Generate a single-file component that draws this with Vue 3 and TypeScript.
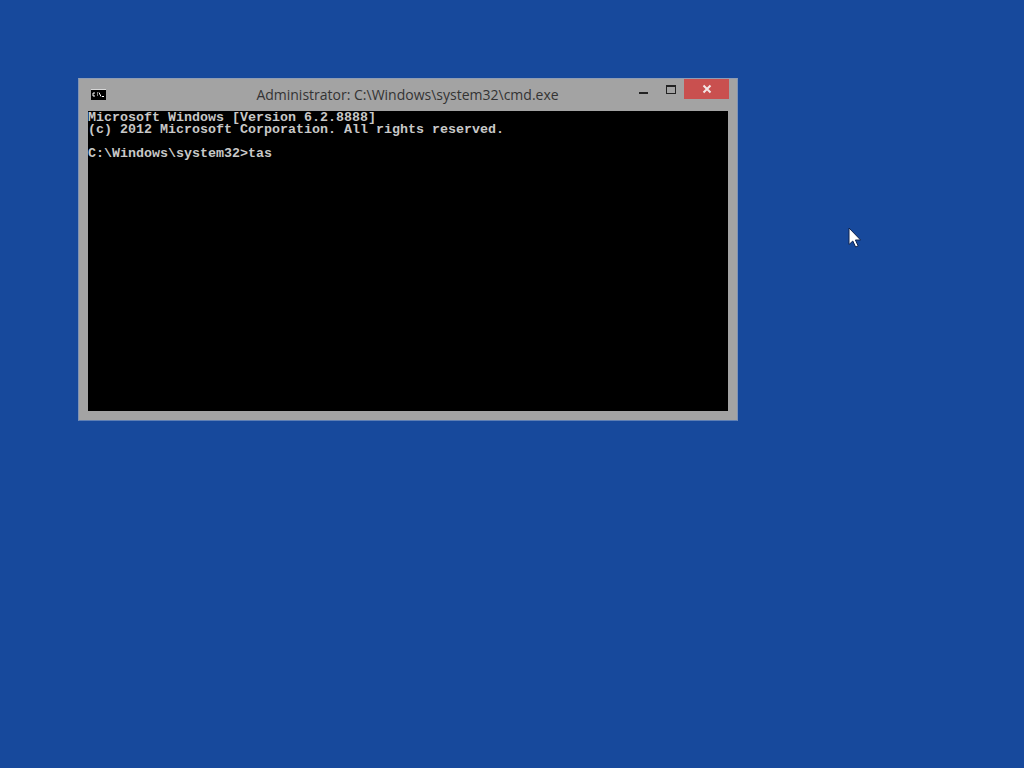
<script setup lang="ts">
const lines: string[] = [
  'Microsoft Windows [Version 6.2.8888]',
  '(c) 2012 Microsoft Corporation. All rights reserved.',
  '',
  'C:\\Windows\\system32>tas',
]
</script>

<template>
  <div class="desktop">
    <section class="window">
      <header class="titlebar">
        <svg class="app-icon" width="15" height="11" viewBox="0 0 15 11">
          <rect width="15" height="11" fill="#000" />
          <rect x="0" y="0" width="15" height="1" fill="#d8d8d8" />
          <path d="M3 4H2V7H3M4 4H3M4 7H3M6 4H7M6 6H7M8 3.5L10 7.5M11 7.5H13" stroke="#fff" stroke-width="1" fill="none" />
        </svg>
        <span class="title">Administrator: C:\Windows\system32\cmd.exe</span>
        <div class="controls">
          <span class="btn min"><i></i></span>
          <span class="btn max"><i></i></span>
          <span class="btn close">
            <svg width="10" height="10" viewBox="0 0 10 10">
              <path d="M1.5 1.5L8.5 8.5M8.5 1.5L1.5 8.5" stroke="#f4e6e6" stroke-width="2" fill="none" />
            </svg>
          </span>
        </div>
      </header>
      <div class="console">
        <div v-for="(line, i) in lines" :key="i" class="line">{{ line }}</div>
      </div>
    </section>
    <svg class="cursor" width="14" height="21" viewBox="0 0 14 21">
      <path d="M1 1V17.5L4.8 14L7.6 20L10.2 19L7.4 13H12.6Z" fill="#fff" stroke="#10244f" stroke-width="1" />
    </svg>
  </div>
</template>

<style>
html, body { margin: 0; background: #17499c; }
</style>

<style scoped>
.desktop {
  position: relative;
  width: 1024px;
  height: 768px;
  overflow: hidden;
  background: #17499c;
}
.window {
  position: absolute;
  left: 78px;
  top: 78px;
  width: 660px;
  height: 343px;
  box-sizing: border-box;
  display: flex;
  flex-direction: column;
  padding: 0 9px 9px 9px;
  background: #a3a3a3;
  border-top: 1px solid #8f9db5;
  border-left: 1px solid #7f93b5;
  border-right: 1px solid #7f93b5;
  border-bottom: 1px solid #5e7fb5;
}
.titlebar {
  position: relative;
  height: 32px;
  flex: none;
  display: flex;
  align-items: center;
  justify-content: center;
}
.app-icon {
  position: absolute;
  left: 3px;
  top: 10px;
}
.title {
  font-family: "Open Sans", "Liberation Sans", sans-serif;
  font-size: 14px;
  color: #333;
  margin-left: -1px;
  margin-bottom: 2px;
}
.controls {
  position: absolute;
  right: -1px;
  top: 0;
  display: flex;
  align-items: flex-start;
}
.btn {
  display: flex;
  align-items: center;
  justify-content: center;
}
.min { width: 27px; height: 27px; }
.min i { display: block; width: 9px; height: 2px; background: #222; }
.max { width: 27px; height: 20px; }
.max i { display: block; box-sizing: border-box; width: 10px; height: 9px; border: 1px solid #222; border-top-width: 2px; }
.close { width: 45px; height: 20px; background: #c9504f; }
.console {
  flex: 1;
  padding-top: 1px;
  background: #000;
  color: #c8c8c8;
  font-family: "Liberation Mono", monospace;
  font-weight: 700;
  font-size: 13.33px;
  line-height: 12px;
}
.line {
  height: 12px;
  white-space: pre;
}
.cursor {
  position: absolute;
  left: 848px;
  top: 227px;
}
</style>
